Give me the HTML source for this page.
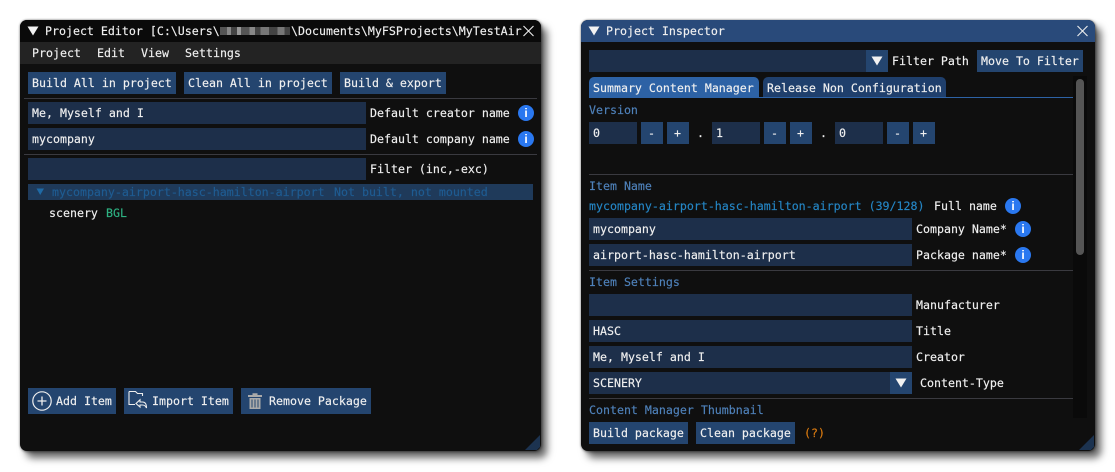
<!DOCTYPE html>
<html><head><meta charset="utf-8"><style>
html,body{margin:0;padding:0;background:#fff;width:1115px;height:472px;overflow:hidden}
body{position:relative;font-family:"DejaVu Sans Mono",monospace;font-size:11.62px;color:#f0f0f0}
div,span.t,svg{position:absolute}
.t{white-space:pre;line-height:23px;height:23px;-webkit-text-stroke:.15px currentColor}
.win{background:#0f0f0f;border-radius:7px;box-shadow:6px 7px 8px rgba(0,0,0,.6),1px 1px 3px rgba(0,0,0,.4),0 0 2px rgba(0,0,0,.4);overflow:hidden}
.in{background:#1d2f4a;height:22px}
.b{background:#24456f;height:22px}
.sep{height:1px;background:#3a3a40}
.lb{color:#4f82bb}
.i{width:16px;height:16px;border-radius:50%;background:#2a78f0;color:#fff;text-align:center;font:bold 12px/16px "Liberation Sans",sans-serif}
</style></head><body>

<div class="win" style="left:20px;top:20px;width:521px;height:431px"></div>
<div style="left:20px;top:20px;width:521px;height:22px;background:#0a0a0a;border-radius:7px 7px 0 0"></div>
<div style="left:20px;top:42px;width:521px;height:22px;background:#232323"></div>
<svg style="left:27px;top:26px" width="12" height="10"><path d="M0.5 0.5H11.5L6 9.5Z" fill="#f2f2f2"/></svg>
<span class="t" style="left:45px;top:20px">Project Editor [C:\Users\</span>
<div style="left:220px;top:27px;width:70px;height:8px;background:linear-gradient(90deg,#555 0 10%,#888 10% 16%,#444 16% 24%,#999 24% 30%,#555 30% 42%,#888 42% 50%,#444 50% 58%,#777 58% 70%,#444 70% 82%,#777 82% 92%,#444 92%)"></div>
<span class="t" style="left:291px;top:20px">\Documents\MyFSProjects\MyTestAir</span>
<svg style="left:522px;top:25px" width="13" height="12"><path d="M1.5 1L11.5 11M11.5 1L1.5 11" stroke="#eee" stroke-width="1.1" fill="none"/></svg>
<span class="t" style="left:32px;top:42px">Project</span>
<span class="t" style="left:97px;top:42px">Edit</span>
<span class="t" style="left:141px;top:42px">View</span>
<span class="t" style="left:185px;top:42px">Settings</span>

<div class="b" style="left:28px;top:72px;width:148px"></div><span class="t" style="left:32px;top:72px">Build All in project</span>
<div class="b" style="left:184px;top:72px;width:148px"></div><span class="t" style="left:188px;top:72px">Clean All in project</span>
<div class="b" style="left:340px;top:72px;width:106px"></div><span class="t" style="left:344px;top:72px">Build &amp; export</span>
<div class="sep" style="left:24px;top:98px;width:513px"></div>
<div class="in" style="left:28px;top:102px;width:338px"></div><span class="t" style="left:32px;top:102px">Me, Myself and I</span>
<span class="t" style="left:370px;top:102px">Default creator name</span><div class="i" style="left:518px;top:105px">i</div>
<div class="in" style="left:28px;top:128px;width:338px"></div><span class="t" style="left:32px;top:128px">mycompany</span>
<span class="t" style="left:370px;top:128px">Default company name</span><div class="i" style="left:518px;top:131px">i</div>
<div class="sep" style="left:24px;top:154px;width:513px"></div>
<div class="in" style="left:28px;top:158px;width:338px"></div>
<span class="t" style="left:370px;top:158px">Filter (inc,-exc)</span>
<div style="left:28px;top:184px;width:505px;height:16px;background:#1f3a5a"></div>
<svg style="left:36px;top:188px" width="9" height="8"><path d="M0.5 0.5H8L4.2 7Z" fill="#1f6aa5"/></svg>
<span class="t" style="left:52px;top:181px;color:#1f5c92">mycompany-airport-hasc-hamilton-airport</span>
<span class="t" style="left:334px;top:181px;color:#1f5c92">Not built, not mounted</span>
<span class="t" style="left:49px;top:202px">scenery</span>
<span class="t" style="left:106px;top:202px;color:#2eb283">BGL</span>

<div class="b" style="left:28px;top:388px;width:88px;height:26px"></div>
<svg style="left:31px;top:390px" width="22" height="22"><circle cx="11" cy="11" r="9.2" stroke="#eee" stroke-width="1.2" fill="none"/><path d="M11 6.5V15.5M6.5 11H15.5" stroke="#eee" stroke-width="1.3"/></svg>
<span class="t" style="left:56px;top:390px">Add Item</span>
<div class="b" style="left:124px;top:388px;width:109px;height:26px"></div>
<svg style="left:127px;top:390px" width="24" height="22"><path d="M2 1.5H8.5L10.5 3.5H15.5V6M2 1.5V14.5H8" stroke="#eee" stroke-width="1.1" fill="none"/><path d="M9 13.5L13 9.8V12H15.5C18 12 19.5 13.5 19.5 18C18.5 15.8 17.5 15 15.5 15H13V17Z" stroke="#eee" stroke-width="1.1" fill="none"/></svg>
<span class="t" style="left:152px;top:390px">Import Item</span>
<div class="b" style="left:241px;top:388px;width:130px;height:26px"></div>
<svg style="left:247px;top:392px" width="16" height="18"><path d="M1 3H15V5H1ZM5.5 3V1.2H10.5V3" fill="#aaa"/><path d="M2.5 6H13.5V17H2.5Z" fill="#aaa"/><path d="M5 7.5V15.5M8 7.5V15.5M11 7.5V15.5" stroke="#24456f" stroke-width="1"/></svg>
<span class="t" style="left:269px;top:390px">Remove Package</span>
<svg style="left:524px;top:434px" width="17" height="17"><path d="M16 1V13L13 16H1Z" fill="#1c3350"/></svg>

<div class="win" style="left:581px;top:20px;width:514px;height:431px"></div>
<div style="left:581px;top:20px;width:514px;height:22px;background:#294a7a;border-radius:7px 7px 0 0"></div>
<svg style="left:588px;top:26px" width="12" height="10"><path d="M0.5 0.5H11.5L6 9.5Z" fill="#f2f2f2"/></svg>
<span class="t" style="left:606px;top:20px">Project Inspector</span>
<svg style="left:1076px;top:25px" width="13" height="12"><path d="M1.5 1L11.5 11M11.5 1L1.5 11" stroke="#eee" stroke-width="1.1" fill="none"/></svg>

<div class="in" style="left:589px;top:50px;width:277px"></div>
<div class="b" style="left:866px;top:50px;width:22px"></div>
<svg style="left:871px;top:56px" width="12" height="10"><path d="M0.5 0.5H11.5L6 9.5Z" fill="#f2f2f2"/></svg>
<span class="t" style="left:892px;top:50px">Filter Path</span>
<div class="b" style="left:977px;top:50px;width:106px"></div><span class="t" style="left:981px;top:50px">Move To Filter</span>

<div style="left:589px;top:77px;width:170px;height:21px;background:#2d62a5;border-radius:5px 5px 0 0"></div>
<span class="t" style="left:593px;top:77px">Summary Content Manager</span>
<div style="left:763px;top:77px;width:183px;height:20px;background:#1f3f6c;border-radius:5px 5px 0 0"></div>
<span class="t" style="left:767px;top:77px">Release Non Configuration</span>
<div style="left:589px;top:97px;width:484px;height:1px;background:#2d62a5"></div>
<div style="left:1073px;top:76px;width:14px;height:342px;background:#0a0a0a"></div>
<div style="left:1076px;top:79px;width:8px;height:176px;background:#555;border-radius:4px"></div>

<span class="t lb" style="left:589px;top:99px">Version</span>
<div class="in" style="left:589px;top:122px;width:48px"></div><span class="t" style="left:593px;top:122px">0</span>
<div class="b" style="left:641px;top:122px;width:22px"></div><span class="t" style="left:648px;top:122px">-</span>
<div class="b" style="left:667px;top:122px;width:22px"></div><span class="t" style="left:674px;top:122px">+</span>
<span class="t" style="left:697px;top:122px">.</span>
<div class="in" style="left:712px;top:122px;width:48px"></div><span class="t" style="left:716px;top:122px">1</span>
<div class="b" style="left:764px;top:122px;width:22px"></div><span class="t" style="left:771px;top:122px">-</span>
<div class="b" style="left:790px;top:122px;width:22px"></div><span class="t" style="left:797px;top:122px">+</span>
<span class="t" style="left:820px;top:122px">.</span>
<div class="in" style="left:835px;top:122px;width:48px"></div><span class="t" style="left:839px;top:122px">0</span>
<div class="b" style="left:887px;top:122px;width:22px"></div><span class="t" style="left:894px;top:122px">-</span>
<div class="b" style="left:913px;top:122px;width:22px"></div><span class="t" style="left:920px;top:122px">+</span>

<div class="sep" style="left:589px;top:174px;width:484px"></div>
<span class="t lb" style="left:589px;top:175px">Item Name</span>
<span class="t" style="left:589px;top:195px;color:#2586c5">mycompany-airport-hasc-hamilton-airport (39/128)</span>
<span class="t" style="left:934px;top:195px">Full name</span><div class="i" style="left:1005px;top:198px">i</div>
<div class="in" style="left:589px;top:218px;width:323px"></div><span class="t" style="left:593px;top:218px">mycompany</span>
<span class="t" style="left:916px;top:218px">Company Name*</span><div class="i" style="left:1015px;top:221px">i</div>
<div class="in" style="left:589px;top:244px;width:323px"></div><span class="t" style="left:593px;top:244px">airport-hasc-hamilton-airport</span>
<span class="t" style="left:916px;top:244px">Package name*</span><div class="i" style="left:1015px;top:247px">i</div>
<div class="sep" style="left:589px;top:270px;width:484px"></div>
<span class="t lb" style="left:589px;top:271px">Item Settings</span>
<div class="in" style="left:589px;top:294px;width:323px"></div>
<span class="t" style="left:916px;top:294px">Manufacturer</span>
<div class="in" style="left:589px;top:320px;width:323px"></div><span class="t" style="left:593px;top:320px">HASC</span>
<span class="t" style="left:916px;top:320px">Title</span>
<div class="in" style="left:589px;top:346px;width:323px"></div><span class="t" style="left:593px;top:346px">Me, Myself and I</span>
<span class="t" style="left:916px;top:346px">Creator</span>
<div class="in" style="left:589px;top:372px;width:301px"></div><span class="t" style="left:593px;top:372px">SCENERY</span>
<div class="b" style="left:890px;top:372px;width:22px"></div>
<svg style="left:895px;top:378px" width="12" height="10"><path d="M0.5 0.5H11.5L6 9.5Z" fill="#f2f2f2"/></svg>
<span class="t" style="left:920px;top:372px">Content-Type</span>
<div class="sep" style="left:589px;top:398px;width:484px"></div>
<span class="t lb" style="left:589px;top:399px">Content Manager Thumbnail</span>
<div class="b" style="left:589px;top:422px;width:99px"></div><span class="t" style="left:593px;top:422px">Build package</span>
<div class="b" style="left:696px;top:422px;width:99px"></div><span class="t" style="left:700px;top:422px">Clean package</span>
<span class="t" style="left:804px;top:422px;color:#d97a10">(?)</span>
<svg style="left:1078px;top:434px" width="17" height="17"><path d="M16 1V13L13 16H1Z" fill="#1c3350"/></svg>
</body></html>
